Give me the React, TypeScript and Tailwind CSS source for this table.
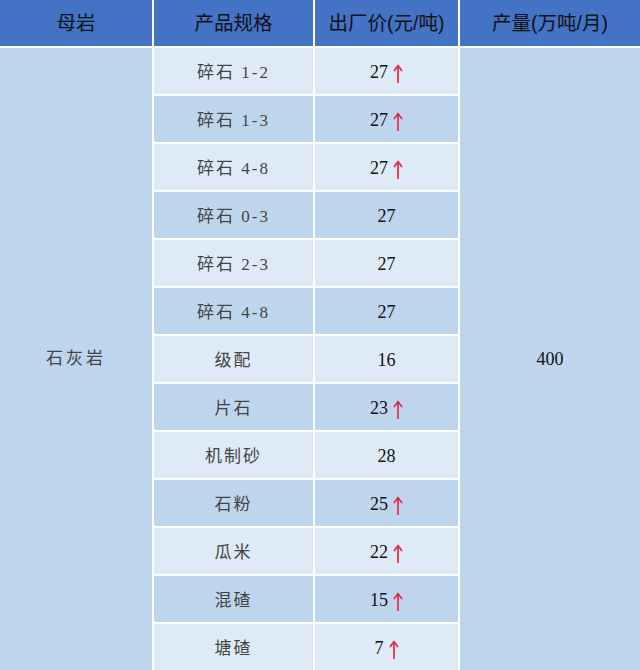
const rows: { name: string; price: string; up: boolean }[] = [
  { name: "碎石 1-2", price: "27", up: true },
  { name: "碎石 1-3", price: "27", up: true },
  { name: "碎石 4-8", price: "27", up: true },
  { name: "碎石 0-3", price: "27", up: false },
  { name: "碎石 2-3", price: "27", up: false },
  { name: "碎石 4-8", price: "27", up: false },
  { name: "级配", price: "16", up: false },
  { name: "片石", price: "23", up: true },
  { name: "机制砂", price: "28", up: false },
  { name: "石粉", price: "25", up: true },
  { name: "瓜米", price: "22", up: true },
  { name: "混碴", price: "15", up: true },
  { name: "塘碴", price: "7", up: true },
];

const UpArrow = () => (
  <svg width="10" height="20" viewBox="0 0 10 20" className="ml-[5px] mt-[3px]">
    <path d="M5 2 L5 19" stroke="#e8203a" strokeWidth="1.6" />
    <path d="M1 7 L5 1.5 L9 7" stroke="#e8203a" strokeWidth="1.6" fill="none" />
  </svg>
);

export default function App() {
  return (
    <div className="w-[640px] h-[670px] overflow-hidden bg-white">
      <div className="grid grid-cols-[152px_159px_143px_1fr] grid-rows-[46px_repeat(13,46px)] gap-[2px] bg-white">
        {["母岩", "产品规格", "出厂价(元/吨)", "产量(万吨/月)"].map((h) => (
          <div
            key={h}
            className="bg-[#4472c4] flex items-center justify-center pt-[1px] text-[19.5px] text-[#111] font-['Liberation_Sans','Noto_Sans_CJK_SC',sans-serif]"
          >
            {h}
          </div>
        ))}
        <div className="row-span-13 col-start-1 row-start-2 bg-[#bed6ed] flex items-center justify-center text-[17px] text-[#444] tracking-[3px] font-['Liberation_Serif','Noto_Sans_CJK_SC',serif]">
          石灰岩
        </div>
        {rows.map((r, i) => {
          const bg = i % 2 === 0 ? "bg-[#deebf7]" : "bg-[#bed6ed]";
          return [
            <div
              key={"n" + i}
              className={`${bg} col-start-2 flex items-center justify-center pt-[3px] text-[17px] text-[#444] tracking-[2px] font-['Liberation_Serif','Noto_Sans_CJK_SC',serif]`}
            >
              {r.name}
            </div>,
            <div
              key={"p" + i}
              className={`${bg} col-start-3 flex items-center justify-center pt-[3px] text-[18px] text-[#111] font-['Liberation_Serif','Noto_Sans_CJK_SC',serif]`}
            >
              <span>{r.price}</span>
              {r.up && <UpArrow />}
            </div>,
          ];
        })}
        <div className="row-span-13 col-start-4 row-start-2 bg-[#bed6ed] flex items-center justify-center text-[18px] text-[#111] font-['Liberation_Serif','Noto_Sans_CJK_SC',serif]">
          400
        </div>
      </div>
    </div>
  );
}
